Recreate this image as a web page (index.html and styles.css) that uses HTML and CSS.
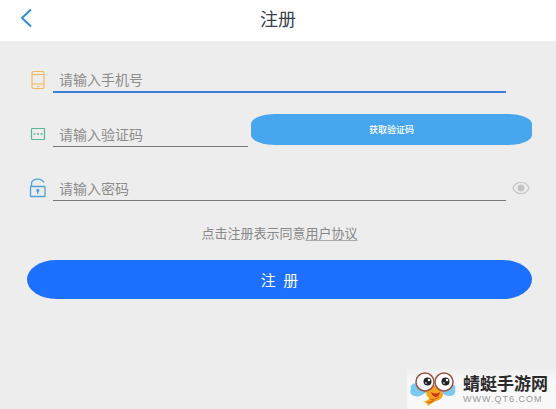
FILE: index.html
```html
<!DOCTYPE html>
<html lang="zh-CN">
<head>
  <meta charset="UTF-8">
  <meta name="viewport" content="width=device-width, initial-scale=1.0">
  <title>注册</title>
  <link rel="stylesheet" href="styles.css">
</head>
<body>
  <header class="header">
    <a href="#" class="back" aria-label="返回">
      <svg width="12" height="20" viewBox="0 0 12 20" fill="none" stroke="#2f8fd0" stroke-width="2"><path d="M11 1.500L2 10l9 8.500"/></svg>
    </a>
    <h1>注册</h1>
  </header>

  <form class="form" id="registerForm">
    <div class="row">
      <label for="phone" aria-label="手机号">
        <svg width="22" height="20" viewBox="0 0 22 20" fill="none" stroke="#f5b75c" stroke-width="1.200"><rect x="5" y="1.500" width="12" height="17" rx="1.500"/><path d="M5 4.500H17M5 14H17M10 16.500h2.500"/></svg>
      </label>
      <input type="tel" id="phone" class="active" placeholder="请输入手机号">
    </div>

    <div class="row row-code">
      <label for="code" aria-label="验证码">
        <svg width="22" height="20" viewBox="0 0 22 20" fill="none" stroke="#58b894" stroke-width="1.200"><rect x="4.500" y="4.500" width="13" height="11" rx="0.500"/><path d="M6.500 10h2M10 10h2M13.500 10h2" stroke-width="1.500"/></svg>
      </label>
      <input type="text" id="code" placeholder="请输入验证码">
      <button type="button" class="code-btn">获取验证码</button>
    </div>

    <div class="row">
      <label for="password" aria-label="密码">
        <svg width="22" height="20" viewBox="0 0 22 20" fill="none" stroke="#4fa3dc" stroke-width="1.300"><rect x="3.500" y="8.500" width="14.500" height="10" rx="0.500"/><path d="M4.500 8.500V6c0-6 10-6.500 12.500-1.500M10.800 12.500v3.500"/><circle cx="10.800" cy="12.500" r="1" fill="#4fa3dc"/></svg>
      </label>
      <input type="password" id="password" placeholder="请输入密码">
      <button type="button" class="eye" aria-label="显示密码">
        <svg width="18" height="14" viewBox="0 0 18 14"><path d="M1 7C4-.500 14-.500 17 7 14 14.500 4 14.500 1 7z" fill="none" stroke="#c8c8c8" stroke-width="1.400"/><circle cx="9" cy="7" r="3.500" fill="#c4c4c4"/></svg>
      </button>
    </div>

    <p class="agree">点击注册表示同意<a href="#">用户协议</a></p>
    <button type="submit" class="submit">注&ensp;册</button>
  </form>

  <div class="site-logo">
    <svg width="48" height="36" viewBox="0 0 48 36">
      <path d="M15 14C7 10 0 13 2 18c-3 5 3 9 9 7l9-5zM32 14c8-4 16-1 14 4 2 5-4 9-10 6l-8-4z" fill="#79cbf4"/>
      <path d="M19 17c3-4 11-3 14 2 3 6-1 10-6 11-3 1-5 3-8 5 0-2-2-4-5-4 3-1 6-2 6-4-3-2-4-7-1-10z" fill="#f6a51c"/>
      <path d="M21 28c3 1 6 0 9-2M18 31c3 1 5 0 7-2" fill="none" stroke="#d96a12" stroke-width="1.200"/>
      <path d="M22 21c3 2 6 2 9 0-1 6-7 7-9 0z" fill="#c8321e"/>
      <circle cx="16" cy="11" r="9" fill="#fff" stroke="#9d5145" stroke-width="1.500"/>
      <circle cx="35" cy="11" r="9" fill="#fff" stroke="#9d5145" stroke-width="1.500"/>
      <circle cx="18.500" cy="10.500" r="4" fill="#222"/>
      <circle cx="36.500" cy="10.500" r="4" fill="#222"/>
      <circle cx="20" cy="9" r="1.300" fill="#fff"/><circle cx="17" cy="12" r="1" fill="#aaa"/>
      <circle cx="38" cy="9" r="1.300" fill="#fff"/><circle cx="35" cy="12" r="1" fill="#aaa"/>
    </svg>
    <div class="site-text">
      <strong>蜻蜓手游网</strong>
      <span>WWW.QT6.COM</span>
    </div>
  </div>
</body>
</html>
```
FILE: styles.css
```css
* {
  box-sizing: border-box;
}
body {
  margin: 0;
  background: #ededed;
  font-family: "Noto Sans CJK SC", sans-serif;
  color: #888;
}
.header {
  display: grid;
  grid-template-columns: 40px 1fr 40px;
  align-items: center;
  height: 41px;
  padding-bottom: 6px;
  background: #fff;
}
.back {
  display: flex;
  justify-content: flex-end;
  padding-right: 8px;
}
h1 {
  grid-column: 2;
  margin: 0;
  text-align: center;
  font-size: 18px;
  line-height: 24px;
  font-weight: 400;
  color: #37424d;
}
.form {
  padding: 18px 24px 0 27px;
}
.row {
  display: grid;
  grid-template-columns: 26px 1fr 26px;
  align-items: end;
  height: 34px;
  margin-bottom: 20px;
}
.row-code {
  grid-template-columns: 26px 195px 1fr;
}
.row label {
  display: flex;
  align-items: center;
  height: 26px;
}
.row input {
  width: 100%;
  height: 28px;
  padding: 2px 6px 0;
  border: 0;
  border-bottom: 1px solid #777;
  border-radius: 0;
  outline: none;
  background: transparent;
  font-family: inherit;
  font-size: 14px;
  color: #333;
}
.row input.active {
  border-bottom: 2px solid #3c7fd6;
}
.row input::placeholder {
  color: #8c8c8c;
  opacity: 1;
}
button {
  border: 0;
  padding: 0;
  font-family: inherit;
  color: #fff;
  cursor: pointer;
}
.code-btn {
  height: 31px;
  margin: 0 0 2px 3px;
  border-radius: 24px / 10px;
  background: #48a6ef;
  font-size: 9px;
  font-weight: 500;
}
.eye {
  display: flex;
  align-items: center;
  justify-content: flex-end;
  height: 26px;
  padding-right: 2px;
  background: none;
}
.agree {
  margin: 22px 0 17px;
  text-align: center;
  font-size: 13px;
  line-height: 20px;
}
.agree a {
  color: inherit;
  text-decoration: underline;
  text-decoration-color: #aaa;
  text-decoration-thickness: 1px;
  text-underline-offset: 2px;
}
.submit {
  width: 100%;
  height: 39px;
  border-radius: 30px / 20px;
  background: #1d70ff;
  font-size: 15px;
}
.site-logo {
  position: absolute;
  right: 0;
  bottom: 0;
  display: flex;
  align-items: center;
  gap: 6px;
  height: 40px;
  padding: 0 8px 0 2px;
  background: linear-gradient(#efefef, #f8f8f8 30%);
}
.site-text strong {
  display: block;
  font-size: 17px;
  line-height: 20px;
  font-weight: 700;
  color: #2b2b2b;
}
.site-text span {
  display: block;
  font-family: "Liberation Sans", Arial, sans-serif;
  font-size: 9px;
  line-height: 12px;
  letter-spacing: 1px;
  color: #999;
}
```
